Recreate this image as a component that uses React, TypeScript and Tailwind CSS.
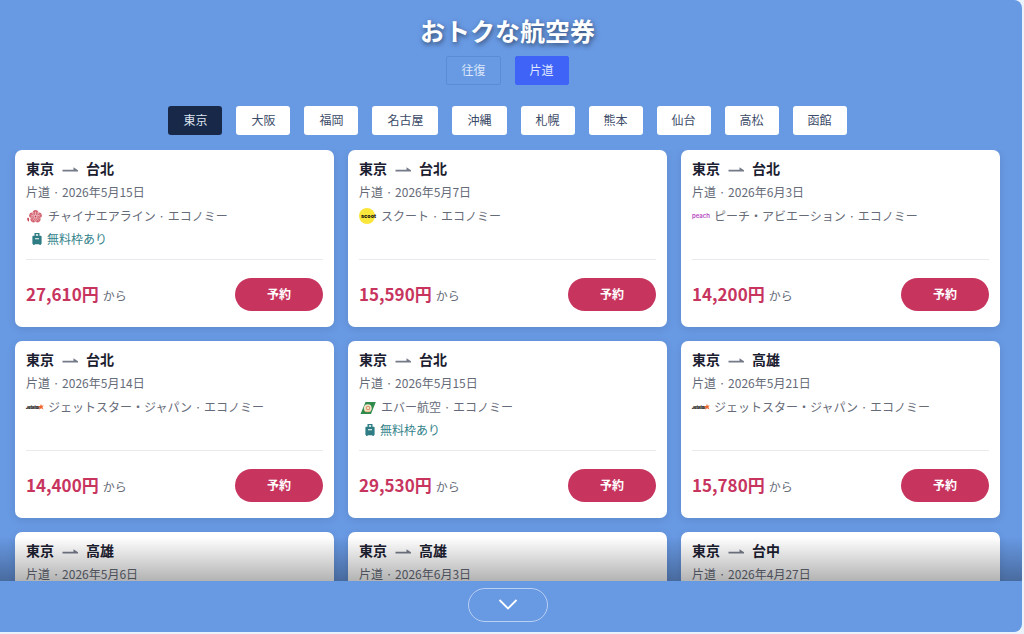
import { useState } from "react";

type Airline = "china" | "scoot" | "peach" | "jetstar" | "eva";

interface Flight {
  id: number;
  to: string;
  date: string;
  airline: Airline;
  baggage?: boolean;
  price: string;
}

const cities = ["東京", "大阪", "福岡", "名古屋", "沖縄", "札幌", "熊本", "仙台", "高松", "函館"];

const airlineNames: Record<Airline, string> = {
  china: "チャイナエアライン",
  scoot: "スクート",
  peach: "ピーチ・アビエーション",
  jetstar: "ジェットスター・ジャパン",
  eva: "エバー航空",
};

const flights: Flight[] = [
  { id: 1, to: "台北", date: "2026年5月15日", airline: "china", baggage: true, price: "27,610円" },
  { id: 2, to: "台北", date: "2026年5月7日", airline: "scoot", price: "15,590円" },
  { id: 3, to: "台北", date: "2026年6月3日", airline: "peach", price: "14,200円" },
  { id: 4, to: "台北", date: "2026年5月14日", airline: "jetstar", price: "14,400円" },
  { id: 5, to: "台北", date: "2026年5月15日", airline: "eva", baggage: true, price: "29,530円" },
  { id: 6, to: "高雄", date: "2026年5月21日", airline: "jetstar", price: "15,780円" },
  { id: 7, to: "高雄", date: "2026年5月6日", airline: "jetstar", price: "15,900円" },
  { id: 8, to: "高雄", date: "2026年6月3日", airline: "peach", price: "16,200円" },
  { id: 9, to: "台中", date: "2026年4月27日", airline: "china", price: "28,400円" },
];

function AirlineLogo({ airline }: { airline: Airline }) {
  return (
    <svg viewBox="0 0 18 18" className="h-[18px] w-[18px] shrink-0 overflow-visible" aria-hidden="true">
      {airline === "china" && (
        <g>
          {[0, 72, 144, 216, 288].map((angle) => (
            <g key={angle} transform={`rotate(${angle} 9.5 9.5)`}>
              <circle cx="9.5" cy="5.8" r="2.8" fill="#d4616f" />
              <path d="M9.5 8.500V4.500M8.100 7.500L7.500 5M10.900 7.500l.6-2.500" stroke="#f6dde0" strokeWidth="0.6" />
            </g>
          ))}
          <circle cx="9.5" cy="9.5" r="1.900" fill="#efc2c7" />
          <circle cx="9.5" cy="9.5" r="0.9" fill="#c43a50" />
          <path d="M1.600 10.600c1.600.3 2 2.200.9 4.200-1.200-1-1.600-2.700-.9-4.200z" fill="#c8374d" />
        </g>
      )}
      {airline === "scoot" && (
        <g>
          <circle cx="8" cy="9" r="8" fill="#fbe63c" />
          <text x="2" y="10.6" fontSize="5.4" fontWeight="800" fill="#111" fontFamily="Inter, sans-serif">
            scoot
          </text>
        </g>
      )}
      {airline === "peach" && (
        <text x="0" y="11" fontSize="6" fontWeight="600" fill="#b545c0" fontFamily="Inter, sans-serif">
          peach
        </text>
      )}
      {airline === "jetstar" && (
        <g>
          <text x="0" y="10.8" fontSize="3.800" fontWeight="900" fontStyle="italic" fill="#222" stroke="#222" strokeWidth="0.2" fontFamily="Inter, sans-serif">
            Jetstar
          </text>
          <path d="M15 5.800l.7 1.900 2.200-.2-1.500 1.600 1 2.400-2.200-1.200-2.200 1.500.7-2.400-1.700-1.400 2.200-.1z" fill="#f0642c" />
        </g>
      )}
      {airline === "eva" && (
        <g>
          <path d="M6.500 4h10.300l-4.800 12H1.500z" fill="#2f8a4c" />
          <circle cx="8.800" cy="10.200" r="3.900" fill="#f1e6cf" />
          <circle cx="9" cy="10" r="1.800" fill="none" stroke="#dc8a55" strokeWidth="1" />
          <path d="M5.300 12.500c1.500 1.500 4.200 1.800 6.200.2" fill="none" stroke="#e9a86f" strokeWidth="0.8" />
        </g>
      )}
    </svg>
  );
}

function RouteArrow() {
  return (
    <svg viewBox="0 0 16 8" className="mx-2 h-2 w-4" aria-hidden="true">
      <path d="M.5 4.800h11V2.200L16 5.300v1.100H.5z" fill="#747a87" />
    </svg>
  );
}

function BaggageIcon() {
  return (
    <svg viewBox="0 0 10 12" className="h-3 w-[10px]" aria-hidden="true">
      <path
        fillRule="evenodd"
        d="M2.500 0h5v2.800H8.800a.8.8 0 0 1 .8.8v6.800a.8.8 0 0 1-.8.8V12H7.400v-.8H2.600V12H1.200v-.8a.8.8 0 0 1-.8-.8V3.600a.8.8 0 0 1 .8-.8h1.300zM3.900 1.200v1.600h2.200V1.200zM3 5.200v1.100h4V5.200z"
        fill="#2f7d84"
      />
    </svg>
  );
}

function FlightCard({ flight }: { flight: Flight }) {
  return (
    <article className="rounded-[7px] bg-white px-[11px] pt-[7px] pb-4 shadow-[0_2px_8px_rgba(0,0,0,0.1)]">
      <div className="min-h-[94px] text-[12px] text-[#666b78]">
        <h2 className="flex h-[23px] items-center text-[14px] font-bold text-[#1b2030]">
          東京
          <RouteArrow />
          {flight.to}
        </h2>
        <p className="leading-[23px]">片道 · {flight.date}</p>
        <p className="flex h-[26px] items-center gap-1">
          <AirlineLogo airline={flight.airline} />
          <span>{airlineNames[flight.airline]} · エコノミー</span>
        </p>
        {flight.baggage && (
          <p className="flex h-5 items-center gap-[5px] pl-[6px] text-[#32828a]">
            <BaggageIcon />
            無料枠あり
          </p>
        )}
      </div>
      <div className="mt-2 flex items-center justify-between border-t border-[#e9eaed] pt-[18px]">
        <p className="flex items-baseline gap-1 pb-[2px] text-[12px] text-[#666b78]">
          <span className="text-[17px] leading-6 font-bold text-[#c7355f]">{flight.price}</span>
          から
        </p>
        <button
          type="button"
          className="h-[33px] cursor-pointer rounded-full bg-[#c7355f] px-8 pb-[2px] text-[12px] font-bold text-white hover:opacity-90"
        >
          予約
        </button>
      </div>
    </article>
  );
}

export default function App() {
  const [trip, setTrip] = useState("片道");
  const [city, setCity] = useState("東京");
  const [open, setOpen] = useState(false);

  return (
    <div className="min-h-screen bg-[#eaf2fc] pr-[2px] pb-[2px] font-['Noto_Sans_CJK_JP',sans-serif]">
      <section className="rounded-r-lg bg-[#6899e3] pt-3 pb-[10px]">
        <div className="pr-[22px] pl-[15px]">
          <h1 className="text-center text-[25px] leading-9 font-bold text-white [text-shadow:1px_2px_5px_rgba(0,0,0,0.5)]">
            おトクな航空券
          </h1>

          <div className="mt-2 flex justify-center gap-[14px]">
            {["往復", "片道"].map((item) => (
              <button
                key={item}
                type="button"
                onClick={() => setTrip(item)}
                className={`h-[29px] cursor-pointer rounded-xs border px-[14px] pb-[2px] text-[12px] ${
                  trip === item
                    ? "border-[#3f63f6] bg-[#3f63f6] text-[#dfe7ff]"
                    : "border-[#5b8ad6] text-[#dbe7fa]"
                }`}
              >
                {item}
              </button>
            ))}
          </div>

          <div className="mt-[21px] flex flex-wrap justify-center gap-[14px]">
            {cities.map((item) => (
              <button
                key={item}
                type="button"
                onClick={() => setCity(item)}
                className={`h-[29px] cursor-pointer rounded-[3px] px-[15px] pb-[2px] text-[12px] ${
                  city === item ? "bg-[#172849] text-[#dde3ee]" : "bg-white text-[#3b4a66]"
                }`}
              >
                {item}
              </button>
            ))}
          </div>
        </div>

        {/* Lista de voos */}
        <div className={`relative mt-[15px] overflow-hidden ${open ? "" : "max-h-[431px]"}`}>
          <div className="grid grid-cols-3 gap-[14px] pr-[22px] pb-4 pl-[15px]">
            {flights.map((flight) => (
              <FlightCard key={flight.id} flight={flight} />
            ))}
          </div>
          {!open && (
            <div className="pointer-events-none absolute inset-x-0 bottom-0 h-11 bg-linear-to-b from-black/0 to-black/30" />
          )}
        </div>

        <div className="flex justify-center pt-[7px] pr-[22px] pl-[15px]">
          <button
            type="button"
            aria-label="もっと見る"
            onClick={() => setOpen(!open)}
            className="flex h-[34px] w-20 cursor-pointer items-center justify-center rounded-full border border-[#b9d0f3] text-white"
          >
            <svg viewBox="0 0 20 12" className={`h-3 w-5 ${open ? "rotate-180" : ""}`} fill="none" aria-hidden="true">
              <path d="M1.500 1l8.500 8.500L18.500 1" stroke="currentColor" strokeWidth="1.800" />
            </svg>
          </button>
        </div>
      </section>
    </div>
  );
}
